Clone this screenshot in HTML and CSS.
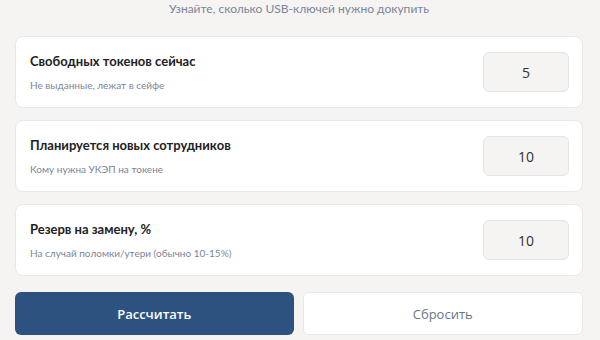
FILE: index.html
```html
<!DOCTYPE html>
<html lang="ru">
<head>
  <meta charset="UTF-8">
  <meta name="viewport" content="width=device-width, initial-scale=1.0">
  <title>Калькулятор токенов</title>
  <link rel="stylesheet" href="styles.css">
</head>
<body>
  <div class="calculator">
    <p class="lead">Узнайте, сколько USB-ключей нужно докупить</p>

    <div class="fields">
      <div class="field-card">
        <div class="field-text">
          <label for="free">Свободных токенов сейчас</label>
          <span class="hint">Не выданные, лежат в сейфе</span>
        </div>
        <input type="text" id="free" value="5">
      </div>

      <div class="field-card">
        <div class="field-text">
          <label for="new">Планируется новых сотрудников</label>
          <span class="hint">Кому нужна УКЭП на токене</span>
        </div>
        <input type="text" id="new" value="10">
      </div>

      <div class="field-card">
        <div class="field-text">
          <label for="reserve">Резерв на замену, %</label>
          <span class="hint">На случай поломки/утери (обычно 10-15%)</span>
        </div>
        <input type="text" id="reserve" value="10">
      </div>
    </div>

    <div class="actions">
      <button class="btn btn-primary">Рассчитать</button>
      <button class="btn btn-secondary">Сбросить</button>
    </div>
  </div>
</body>
</html>
```

FILE: styles.css
```css
:root {
  --bg: #f5f4f2;
  --card: #ffffff;
  --border: #eae8e5;
  --text: #222222;
  --muted: #7d8597;
  --primary: #2e527f;
}

* {
  margin: 0;
  padding: 0;
  box-sizing: border-box;
}

body {
  font-family: 'Lato', 'Noto Sans', sans-serif;
  background-color: var(--bg);
  color: var(--text);
}

.calculator {
  padding: 0 17px 0 15px;
}

.lead {
  text-align: center;
  font-size: 12px;
  color: var(--muted);
  line-height: 17px;
  margin-bottom: 19px;
}

.fields {
  display: flex;
  flex-direction: column;
  gap: 12px;
}

.field-card {
  display: flex;
  align-items: center;
  justify-content: space-between;
  height: 72px;
  padding: 0 13px 0 14px;
  background: var(--card);
  border: 1px solid var(--border);
  border-radius: 8px;
}

.field-text {
  display: flex;
  flex-direction: column;
  gap: 8px;
}

.field-text label {
  font-size: 13px;
  font-weight: 700;
  line-height: 18px;
}

.hint {
  font-size: 10px;
  color: var(--muted);
  line-height: 14px;
}

input {
  width: 86px;
  height: 40px;
  border: 1px solid #e8e6e3;
  border-radius: 6px;
  background: var(--bg);
  font-family: 'Open Sans', sans-serif;
  font-size: 14px;
  color: #333;
  text-align: center;
}

input:focus {
  outline: none;
}

.actions {
  display: flex;
  gap: 9px;
  margin-top: 16px;
}

.btn {
  flex: 1;
  height: 43px;
  border-radius: 6px;
  font-family: 'Open Sans', sans-serif;
  font-size: 13px;
  font-weight: 600;
  cursor: pointer;
}

.btn-primary {
  background: var(--primary);
  color: #fff;
  border: none;
}

.btn-secondary {
  background: var(--card);
  color: #6b7488;
  border: 1px solid var(--border);
  font-weight: 500;
}
```
